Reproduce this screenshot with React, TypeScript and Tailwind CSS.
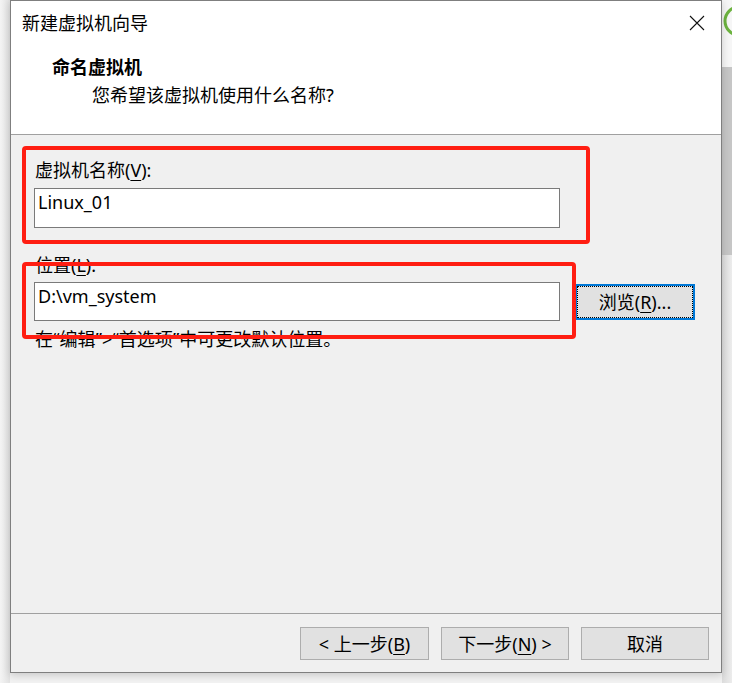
const font = "font-['Noto_Sans','Noto_Sans_CJK_SC',sans-serif]";

function Key({ k }: { k: string }) {
  return <span className="underline underline-offset-[3px] decoration-[1px]">{k}</span>;
}

function CloseIcon() {
  return (
    <svg width="16" height="16" viewBox="0 0 16 16" className="block">
      <path d="M1 1 L15 15 M15 1 L1 15" stroke="#111" strokeWidth="1.1" fill="none" />
    </svg>
  );
}

function TextBox({ value, h }: { value: string; h: string }) {
  return (
    <div className={`w-[526px] ${h} bg-white border border-[#7a7a7a] pl-[3px] pt-[1px] text-[18px] leading-[24px] text-black`}>
      {value}
    </div>
  );
}

function FooterButton({ children, w }: { children: React.ReactNode; w: string }) {
  return (
    <div className={`${w} h-[33px] flex items-center justify-center bg-[#e1e1e1] border border-[#adadad] text-[18px] leading-[24px] text-black`}>
      {children}
    </div>
  );
}

export default function App() {
  return (
    <div className={`w-[732px] h-[683px] bg-[#f2f2f2] overflow-hidden flex items-start ${font}`}>
      <div className="w-[10px] h-full bg-gradient-to-r from-[#f4f4f4] to-[#e2e2e2]" />

      <div className="relative w-[712px] h-[673px] flex flex-col bg-[#f0f0f0] border border-[#7f7f7f] shadow-[0_2px_8px_rgba(0,0,0,0.18)]">
        {/* header */}
        <div className="h-[134px] bg-white border-b border-[#a0a0a0] flex flex-col">
          <div className="h-[44px] flex items-center justify-between pl-[11px] pr-[16px]">
            <span className="text-[18px] leading-[24px] text-black">新建虚拟机向导</span>
            <CloseIcon />
          </div>
          <div className="mt-[10px] pl-[41px] text-[18px] leading-[24px] font-bold text-black">命名虚拟机</div>
          <div className="mt-[4px] pl-[81px] text-[18px] leading-[24px] text-black">您希望该虚拟机使用什么名称?</div>
        </div>

        {/* body */}
        <div className="flex-1 flex flex-col pl-[23px] pt-[23px]">
          <div className="ml-[1px] text-[18px] leading-[24px] text-black">
            虚拟机名称(<Key k="V" />):
          </div>
          <div className="mt-[6px]">
            <TextBox value="Linux_01" h="h-[40px]" />
          </div>
          <div className="mt-[25px] ml-[1px] text-[18px] leading-[24px] text-black">
            位置(<Key k="L" />):
          </div>
          <div className="mt-[5px] flex items-start gap-[15px]">
            <TextBox value="D:\vm_system" h="h-[39px]" />
            <div className="mt-[2px] w-[120px] h-[36px] border-2 border-[#0078d7] bg-[#e1e1e1]">
              <div className="h-full border border-dotted border-black flex items-center justify-center text-[18px] leading-[24px] text-black">
                浏览(<Key k="R" />)...
              </div>
            </div>
          </div>
          <div className="mt-[6px] ml-[1px] text-[18px] leading-[24px] text-black">
            在“编辑”&gt;“首选项”中可更改默认位置。
          </div>
        </div>

        {/* footer */}
        <div className="h-[59px] border-t border-[#a0a0a0] flex justify-end items-start pt-[13px] pr-[12px] gap-[12px]">
          <FooterButton w="w-[129px]">
            &lt; 上一步(<Key k="B" />)
          </FooterButton>
          <FooterButton w="w-[128px]">
            下一步(<Key k="N" />) &gt;
          </FooterButton>
          <FooterButton w="w-[128px]">取消</FooterButton>
        </div>

        {/* annotation boxes */}
        <div className="absolute left-[11px] top-[145px] w-[568px] h-[98px] border-4 border-[#ff1e12] rounded-[4px]" />
        <div className="absolute left-[11px] top-[261px] w-[554px] h-[77px] border-4 border-[#ff1e12] rounded-[4px]" />
      </div>

      <div className="w-[10px] h-full flex flex-col">
        <div className="h-[67px] bg-[#f6f6f6] overflow-hidden">
          <svg width="10" height="67" viewBox="0 0 10 67" className="block">
            <circle cx="17" cy="21" r="14" stroke="#6cb33f" strokeWidth="3" fill="none" />
          </svg>
        </div>
        <div className="h-[188px] bg-[#c6c6c6]" />
        <div className="flex-1 bg-gradient-to-r from-[#dcdcdc] to-[#ececec]" />
      </div>
    </div>
  );
}
